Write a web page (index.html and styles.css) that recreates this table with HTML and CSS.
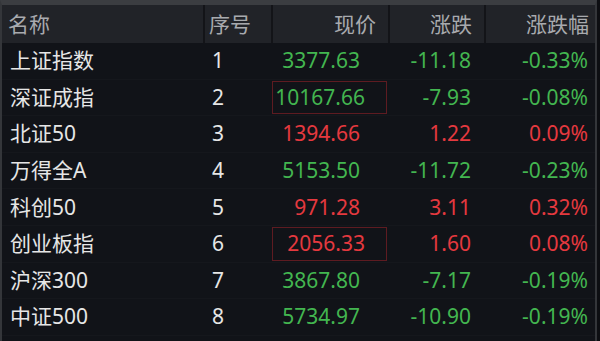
FILE: index.html
```html
<!DOCTYPE html>
<html>
<head>
  <meta charset="utf-8">
  <title>指数行情</title>
  <link rel="stylesheet" href="styles.css">
</head>
<body>
  <div class="board">
    <div class="row head">
      <div class="cell name">名称</div>
      <div class="cell no">序号</div>
      <div class="cell num">现价</div>
      <div class="cell num">涨跌</div>
      <div class="cell num last">涨跌幅</div>
    </div>

    <div class="row">
      <div class="cell name">上证指数</div>
      <div class="cell no">1</div>
      <div class="cell num price down">3377.63</div>
      <div class="cell num down">-11.18</div>
      <div class="cell num last down">-0.33%</div>
    </div>
    <div class="row">
      <div class="cell name">深证成指</div>
      <div class="cell no">2</div>
      <div class="cell num price down boxed">10167.66</div>
      <div class="cell num down">-7.93</div>
      <div class="cell num last down">-0.08%</div>
    </div>
    <div class="row">
      <div class="cell name">北证50</div>
      <div class="cell no">3</div>
      <div class="cell num price up">1394.66</div>
      <div class="cell num up">1.22</div>
      <div class="cell num last up">0.09%</div>
    </div>
    <div class="row">
      <div class="cell name">万得全A</div>
      <div class="cell no">4</div>
      <div class="cell num price down">5153.50</div>
      <div class="cell num down">-11.72</div>
      <div class="cell num last down">-0.23%</div>
    </div>
    <div class="row">
      <div class="cell name">科创50</div>
      <div class="cell no">5</div>
      <div class="cell num price up">971.28</div>
      <div class="cell num up">3.11</div>
      <div class="cell num last up">0.32%</div>
    </div>
    <div class="row">
      <div class="cell name">创业板指</div>
      <div class="cell no">6</div>
      <div class="cell num price up boxed">2056.33</div>
      <div class="cell num up">1.60</div>
      <div class="cell num last up">0.08%</div>
    </div>
    <div class="row">
      <div class="cell name">沪深300</div>
      <div class="cell no">7</div>
      <div class="cell num price down">3867.80</div>
      <div class="cell num down">-7.17</div>
      <div class="cell num last down">-0.19%</div>
    </div>
    <div class="row">
      <div class="cell name">中证500</div>
      <div class="cell no">8</div>
      <div class="cell num price down">5734.97</div>
      <div class="cell num down">-10.90</div>
      <div class="cell num last down">-0.19%</div>
    </div>
  </div>
</body>
</html>
```

FILE: styles.css
```css
html, body {
  margin: 0;
  background: #0d0e12;
}
body {
  font-family: "Noto Sans", "Noto Sans CJK SC", sans-serif;
  font-size: 21px;
  color: #e6e6e6;
}
.board {
  width: 593px;
  height: 336px;
  background: #111318;
  border-top: 5px solid #3b3d41;
  border-left: 2px solid #34363a;
  border-right: 2px solid #34363a;
}
.row {
  display: grid;
  grid-template-columns: 201px 68px 117px 96px 111px;
  height: 36.6px;
  border-bottom: 1px solid #15171c;
  box-sizing: border-box;
}
.cell {
  display: flex;
  align-items: center;
  white-space: nowrap;
  line-height: 1;
}
.name {
  padding-left: 8px;
}
.no {
  padding-left: 9px;
}
.num {
  justify-content: flex-end;
  padding-right: 13px;
}
.price {
  padding-right: 28px;
}
.last {
  padding-right: 7px;
}

.head {
  height: 38px;
  background: #212328;
  color: #a8aaae;
  border-bottom: none;
}
.head .cell + .cell {
  border-left: 2px solid #131418;
}
.head .name {
  padding-left: 6px;
}
.head .no {
  padding-left: 4px;
}
.head .num {
  padding-right: 12px;
}
.head .last {
  padding-right: 6px;
}

.up {
  color: #e5393f;
}
.down {
  color: #43b650;
}
.boxed {
  outline: 1px solid #5e1b21;
  outline-offset: -2px;
  padding-right: 23px;
}
```
